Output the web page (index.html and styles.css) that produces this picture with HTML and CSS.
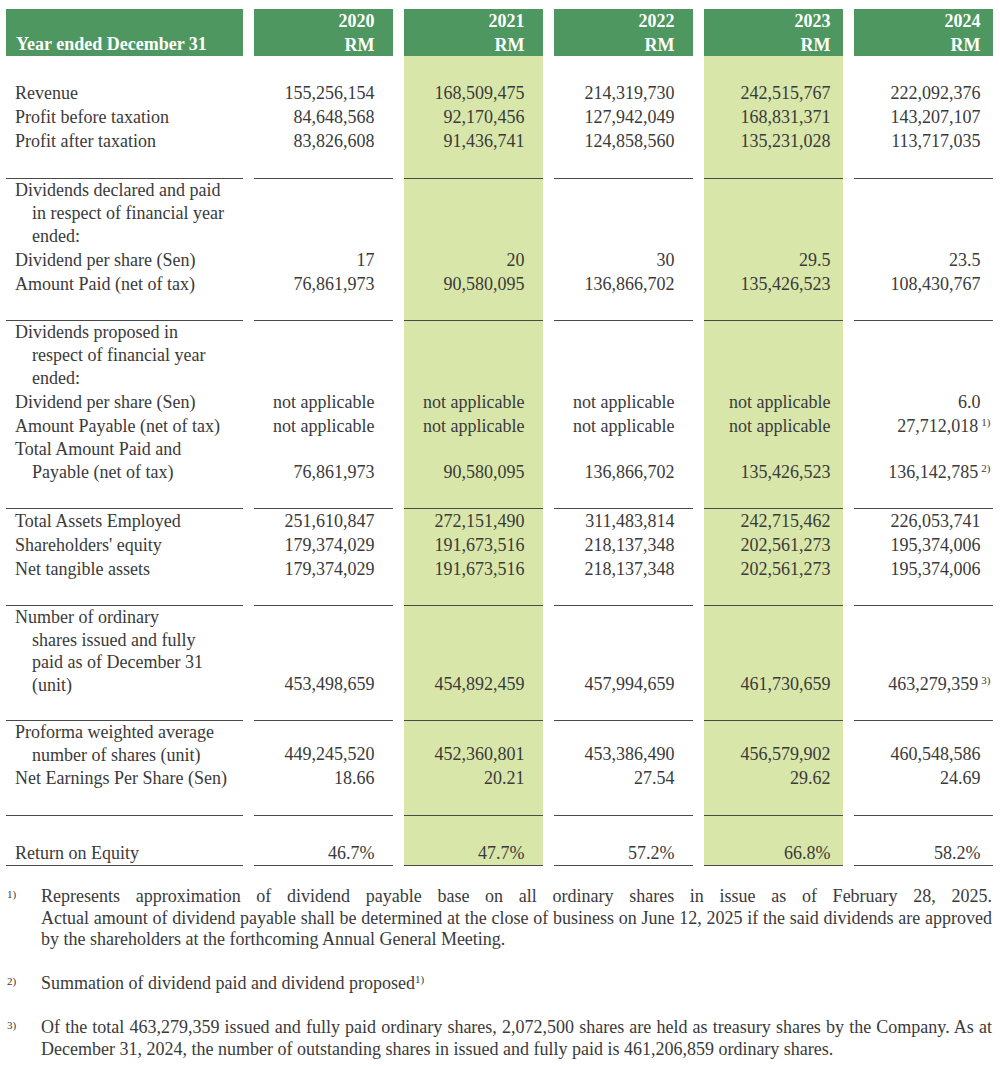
FILE: index.html
```html
<!DOCTYPE html>
<html lang="en">
<head>
<meta charset="utf-8">
<title>Five-year financial summary</title>
<link rel="stylesheet" href="styles.css">
</head>
<body>
<div class="fin">
  <div class="r head">
    <div class="c lab">Year ended December 31</div>
    <div class="c">2020<br>RM</div>
    <div class="c">2021<br>RM</div>
    <div class="c">2022<br>RM</div>
    <div class="c">2023<br>RM</div>
    <div class="c">2024<br>RM</div>
  </div>

  <div class="r gap"><i></i><i></i><i></i><i></i><i></i><i></i></div>
  <div class="r"><div class="c lab">Revenue</div><div class="c">155,256,154</div><div class="c">168,509,475</div><div class="c">214,319,730</div><div class="c">242,515,767</div><div class="c">222,092,376</div></div>
  <div class="r"><div class="c lab">Profit before taxation</div><div class="c">84,648,568</div><div class="c">92,170,456</div><div class="c">127,942,049</div><div class="c">168,831,371</div><div class="c">143,207,107</div></div>
  <div class="r"><div class="c lab">Profit after taxation</div><div class="c">83,826,608</div><div class="c">91,436,741</div><div class="c">124,858,560</div><div class="c">135,231,028</div><div class="c">113,717,035</div></div>
  <div class="r sep s1"><i></i><i></i><i></i><i></i><i></i><i></i></div>

  <div class="r"><div class="c lab w">Dividends declared and paid<br>in respect of financial year<br>ended:</div><div class="c"></div><div class="c"></div><div class="c"></div><div class="c"></div><div class="c"></div></div>
  <div class="r"><div class="c lab">Dividend per share (Sen)</div><div class="c">17</div><div class="c">20</div><div class="c">30</div><div class="c">29.5</div><div class="c">23.5</div></div>
  <div class="r"><div class="c lab">Amount Paid (net of tax)</div><div class="c">76,861,973</div><div class="c">90,580,095</div><div class="c">136,866,702</div><div class="c">135,426,523</div><div class="c">108,430,767</div></div>
  <div class="r sep"><i></i><i></i><i></i><i></i><i></i><i></i></div>

  <div class="r"><div class="c lab w">Dividends proposed in<br>respect of financial year<br>ended:</div><div class="c"></div><div class="c"></div><div class="c"></div><div class="c"></div><div class="c"></div></div>
  <div class="r"><div class="c lab">Dividend per share (Sen)</div><div class="c">not applicable</div><div class="c">not applicable</div><div class="c">not applicable</div><div class="c">not applicable</div><div class="c">6.0</div></div>
  <div class="r"><div class="c lab">Amount Payable (net of tax)</div><div class="c">not applicable</div><div class="c">not applicable</div><div class="c">not applicable</div><div class="c">not applicable</div><div class="c nt"><span>27,712,018<sup>1)</sup></span></div></div>
  <div class="r"><div class="c lab w">Total Amount Paid and<br>Payable (net of tax)</div><div class="c">76,861,973</div><div class="c">90,580,095</div><div class="c">136,866,702</div><div class="c">135,426,523</div><div class="c nt"><span>136,142,785<sup>2)</sup></span></div></div>
  <div class="r sep"><i></i><i></i><i></i><i></i><i></i><i></i></div>

  <div class="r"><div class="c lab">Total Assets Employed</div><div class="c">251,610,847</div><div class="c">272,151,490</div><div class="c">311,483,814</div><div class="c">242,715,462</div><div class="c">226,053,741</div></div>
  <div class="r"><div class="c lab">Shareholders' equity</div><div class="c">179,374,029</div><div class="c">191,673,516</div><div class="c">218,137,348</div><div class="c">202,561,273</div><div class="c">195,374,006</div></div>
  <div class="r"><div class="c lab">Net tangible assets</div><div class="c">179,374,029</div><div class="c">191,673,516</div><div class="c">218,137,348</div><div class="c">202,561,273</div><div class="c">195,374,006</div></div>
  <div class="r sep"><i></i><i></i><i></i><i></i><i></i><i></i></div>

  <div class="r"><div class="c lab w t">Number of ordinary<br>shares issued and fully<br>paid as of December 31<br>(unit)</div><div class="c">453,498,659</div><div class="c">454,892,459</div><div class="c">457,994,659</div><div class="c">461,730,659</div><div class="c nt"><span>463,279,359<sup>3)</sup></span></div></div>
  <div class="r sep"><i></i><i></i><i></i><i></i><i></i><i></i></div>

  <div class="r"><div class="c lab w t">Proforma weighted average<br>number of shares (unit)</div><div class="c">449,245,520</div><div class="c">452,360,801</div><div class="c">453,386,490</div><div class="c">456,579,902</div><div class="c">460,548,586</div></div>
  <div class="r"><div class="c lab">Net Earnings Per Share (Sen)</div><div class="c">18.66</div><div class="c">20.21</div><div class="c">27.54</div><div class="c">29.62</div><div class="c">24.69</div></div>
  <div class="r sep s1"><i></i><i></i><i></i><i></i><i></i><i></i></div>

  <div class="r gap"><i></i><i></i><i></i><i></i><i></i><i></i></div>
  <div class="r last"><div class="c lab">Return on Equity</div><div class="c">46.7%</div><div class="c">47.7%</div><div class="c">57.2%</div><div class="c">66.8%</div><div class="c">58.2%</div></div>
</div>

<div class="notes">
  <div class="fn">
    <span class="mk">1)</span>
    <p><span class="jl">Represents approximation of dividend payable base on all ordinary shares in issue as of February 28, 2025.</span><span class="jl">Actual amount of dividend payable shall be determined at the close of business on June 12, 2025 if the said dividends are approved</span><span class="ll">by the shareholders at the forthcoming Annual General Meeting.</span></p>
  </div>
  <div class="fn">
    <span class="mk">2)</span>
    <p>Summation of dividend paid and dividend proposed<sup>1)</sup></p>
  </div>
  <div class="fn">
    <span class="mk">3)</span>
    <p><span class="jl">Of the total 463,279,359 issued and fully paid ordinary shares, 2,072,500 shares are held as treasury shares by the Company. As at</span><span class="ll">December 31, 2024, the number of outstanding shares in issued and fully paid is 461,206,859 ordinary shares.</span></p>
  </div>
</div>
</body>
</html>
```

FILE: styles.css
```css
html, body {
  margin: 0;
  padding: 0;
  background: #ffffff;
}

body {
  font-family: "Liberation Serif", "Times New Roman", serif;
  font-size: 18px;
  color: #3a3a3a;
}

.fin {
  display: grid;
  grid-template-columns: 236.5px repeat(5, 138.5px);
  column-gap: 11.5px;
  margin: 9px 0 0 6px;
}

.r {
  display: contents;
}

.c {
  line-height: 24px;
  padding-right: 18px;
  display: flex;
  justify-content: flex-end;
  align-items: flex-end;
  text-align: right;
  white-space: nowrap;
}

.r > :nth-child(5),
.r > :nth-child(6) {
  padding-right: 12px;
}

.r > :nth-child(3),
.r > :nth-child(5) {
  background: #d9e6aa;
}

.c.lab {
  display: block;
  text-align: left;
  padding: 0 0 0 26px;
  text-indent: -17px;
}

.c.lab.w {
  line-height: 23px;
}

.c.lab.w.t {
  line-height: 22.5px;
}

.c.nt {
  padding-right: 2px;
}

.c sup {
  font-size: 11px;
  line-height: 0;
  vertical-align: 6px;
  margin-left: 3px;
}

/* header */
.head > .c {
  background: #4e9760;
  color: #ffffff;
  font-weight: bold;
  height: 47px;
  box-sizing: border-box;
  line-height: 24px;
  align-items: flex-start;
}

.head > .c.lab {
  display: flex;
  justify-content: flex-start;
  align-items: flex-end;
  text-align: left;
  padding-left: 10px;
  text-indent: 0;
  padding-bottom: 0;
  line-height: 23px;
}

.gap > i {
  display: block;
  height: 25px;
}

.sep > i {
  display: block;
  height: 24px;
  border-bottom: 1px solid #4a4a4a;
}

.sep.s1 > i {
  height: 25px;
}

.last > .c {
  border-bottom: 1px solid #4a4a4a;
}

/* footnotes */
.notes {
  margin: 20px 8px 0 7px;
  line-height: 21.5px;
}

.fn {
  display: grid;
  grid-template-columns: 34px 1fr;
  margin-bottom: 22.5px;
}

.fn p {
  margin: 0;
}

.mk {
  font-size: 11px;
  line-height: 14px;
  padding-top: 1px;
}

.jl {
  display: block;
  text-align: justify;
  text-align-last: justify;
}

.ll {
  display: block;
}

.fn sup {
  font-size: 11px;
  line-height: 0;
  vertical-align: 6px;
}
```
